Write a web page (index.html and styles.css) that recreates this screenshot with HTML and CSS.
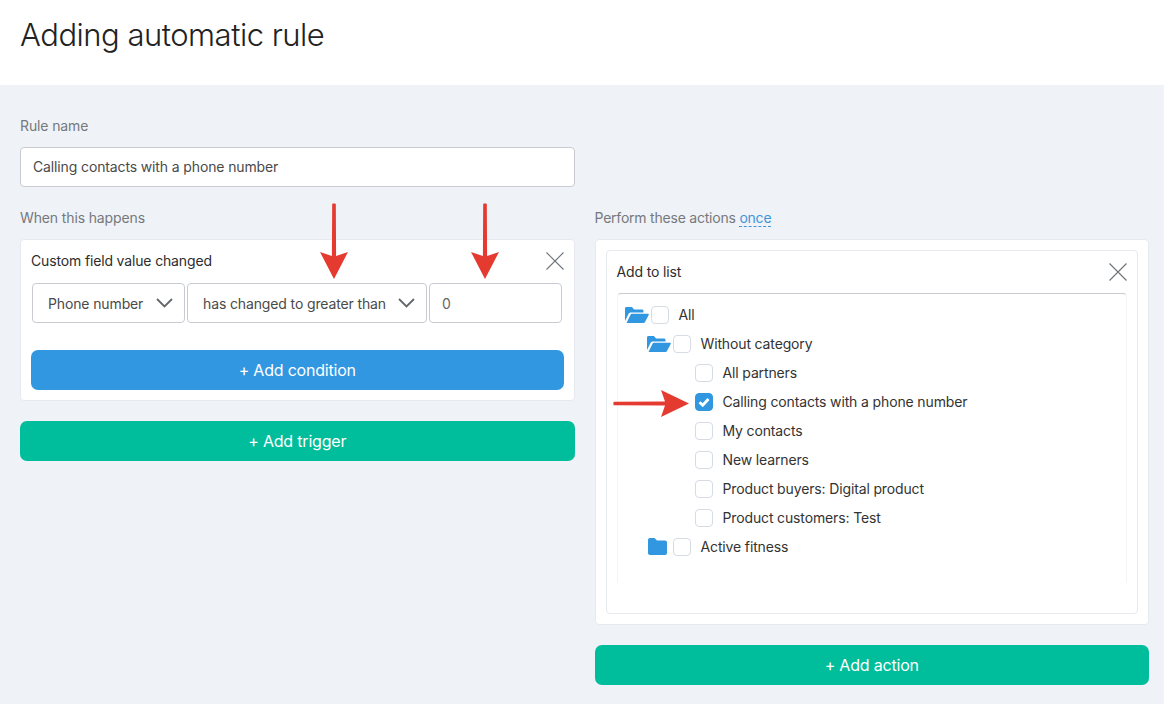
FILE: index.html
```html
<!DOCTYPE html>
<html lang="en">
<head>
<meta charset="utf-8">
<title>Adding automatic rule</title>
<link rel="stylesheet" href="styles.css">
</head>
<body>
<header class="header"><h1 class="title">Adding automatic rule</h1></header>
<main class="content">
  <div class="name-block">
    <label class="label">Rule name</label>
    <div class="input name-input">Calling contacts with a phone number</div>
  </div>
  <div class="columns">
    <section class="column">
      <div class="label">When this happens</div>
      <div class="card trigger-card">
        <div class="card-head">
          <span class="card-title">Custom field value changed</span>
          <svg class="close" viewBox="0 0 18 18"><path d="M0.5 0.5L17.5 17.5M17.5 0.5L0.5 17.5"/></svg>
        </div>
        <div class="condition">
          <div class="select select-field">Phone number<svg class="chev" viewBox="0 0 17 10"><path d="M1 1L8.5 8.5L16 1"/></svg></div>
          <div class="select select-op">has changed to greater than<svg class="chev" viewBox="0 0 17 10"><path d="M1 1L8.5 8.5L16 1"/></svg></div>
          <div class="select select-value">0</div>
        </div>
        <div class="btn btn-blue">+ Add condition</div>
      </div>
      <div class="btn btn-green add-trigger">+ Add trigger</div>
    </section>
    <section class="column">
      <div class="label label-tight">Perform these actions <a class="once">once</a></div>
      <div class="card action-card">
        <div class="inner-card">
          <div class="card-head action-head">
            <span class="card-title">Add to list</span>
            <svg class="close" viewBox="0 0 18 18"><path d="M0.5 0.5L17.5 17.5M17.5 0.5L0.5 17.5"/></svg>
          </div>
          <div class="tree">
            <div class="row lvl0"><svg class="folder" viewBox="0 0 24 16"><path d="M0 14V1.500C0 .7.7 0 1.500 0H7l2 2.500h8c.8 0 1.500.7 1.500 1.500V5.500H6C4.800 5.500 4 6 3.500 7L0 14ZM1.500 16L5.500 7.800C5.800 7.200 6.300 6.800 7 6.800H23C23.700 6.800 24 7.500 23.700 8.100L20 15C19.700 15.700 19.200 16 18.500 16Z"/></svg><span class="check"></span><span class="text">All</span></div>
            <div class="row lvl1"><svg class="folder" viewBox="0 0 24 16"><path d="M0 14V1.500C0 .7.7 0 1.500 0H7l2 2.500h8c.8 0 1.500.7 1.500 1.500V5.500H6C4.800 5.500 4 6 3.500 7L0 14ZM1.500 16L5.500 7.800C5.800 7.200 6.300 6.800 7 6.800H23C23.700 6.800 24 7.500 23.700 8.100L20 15C19.700 15.700 19.200 16 18.500 16Z"/></svg><span class="check"></span><span class="text">Without category</span></div>
            <div class="row lvl2"><span class="check"></span><span class="text">All partners</span></div>
            <div class="row lvl2"><span class="check checked"><svg viewBox="0 0 18 18"><path d="M4.500 9.300L7.700 12.300L13.500 6"/></svg></span><span class="text">Calling contacts with a phone number</span></div>
            <div class="row lvl2"><span class="check"></span><span class="text">My contacts</span></div>
            <div class="row lvl2"><span class="check"></span><span class="text">New learners</span></div>
            <div class="row lvl2"><span class="check"></span><span class="text">Product buyers: Digital product</span></div>
            <div class="row lvl2"><span class="check"></span><span class="text">Product customers: Test</span></div>
            <div class="row lvl1"><svg class="folder folder-closed" viewBox="0 0 19 17"><path d="M0 2C0 .8.8 0 2 0H6.500L9 2.500H17C18.200 2.500 19 3.300 19 4.500V15C19 16.200 18.200 17 17 17H2C.8 17 0 16.200 0 15Z"/></svg><span class="check"></span><span class="text">Active fitness</span></div>
          </div>
        </div>
      </div>
      <div class="btn btn-green add-action">+ Add action</div>
    </section>
  </div>
</main>
<svg class="arrow arrow-a" viewBox="0 0 28 77"><path d="M12.200 1C12.200 .2 15.800 .2 15.800 1L16.100 53L28 49L14 76L0 49L11.900 53Z"/></svg>
<svg class="arrow arrow-b" viewBox="0 0 28 77"><path d="M12.200 1C12.200 .2 15.800 .2 15.800 1L16.100 53L28 49L14 76L0 49L11.900 53Z"/></svg>
<svg class="arrow arrow-c" viewBox="0 0 77 27"><path d="M1 11.700C.2 11.700 .2 15.300 1 15.300L52 15.600L48 27L76 13.500L48 0L52 11.400Z"/></svg>
</body>
</html>
```

FILE: styles.css
```css
* { box-sizing: border-box; }
html, body { margin: 0; height: 100%; }
body {
  position: relative;
  height: 704px;
  overflow: hidden;
  background: #eff2f7;
  font-family: Inter, "Liberation Sans", sans-serif;
  font-size: 14px;
  letter-spacing: -0.13px;
  color: #333;
}
.header { height: 85px; background: #fff; padding: 15px 20px 0; }
.title { margin: 0; font-size: 31px; line-height: 40px; font-weight: 300; letter-spacing: -0.5px; color: #222; }
.content { padding: 31px 15px 0 20px; }
.label { display: block; font-size: 14px; line-height: 20px; color: #76797d; }
.label-tight { letter-spacing: -0.22px; }
.name-block { width: 555px; }
.input { background: #fff; border: 1px solid #c8ccd1; border-radius: 4px; }
.name-input { margin-top: 11px; height: 40px; padding: 0 12px; line-height: 38px; color: #4a4a4a; }
.columns { display: flex; gap: 20px; margin-top: 21px; align-items: flex-start; }
.column { width: 554.500px; }
.card { margin-top: 11px; background: #fff; border: 1px solid #e6e9ee; border-radius: 4px; }
.trigger-card { height: 162px; padding: 10px; }
.card-head { display: flex; justify-content: space-between; align-items: center; height: 22px; }
.card-title { line-height: 22px; color: #2d2d2d; letter-spacing: -0.15px; }
.close { width: 18px; height: 18px; fill: none; stroke: #6f7478; stroke-width: 1.100; }
.condition { display: flex; gap: 2px; margin-top: 11px; padding-left: 1px; }
.select {
  display: flex; align-items: center; justify-content: space-between;
  height: 40px; background: #fff; border: 1px solid #c8ccd1; border-radius: 4px; color: #4a4a4a;
}
.select-field { width: 153px; padding: 0 11px 0 15px; }
.select-op { width: 240px; padding: 0 11px 0 15px; }
.select-value { width: 133px; padding: 0 12px; color: #666; }
.chev { width: 17px; height: 10px; fill: none; stroke: #63676b; stroke-width: 1.800; }
.btn {
  display: flex; align-items: center; justify-content: center;
  height: 40px; border-radius: 7px; color: #fff; font-size: 16px; letter-spacing: -0.2px;
}
.btn-blue { background: #3097e0; margin-top: 27px; }
.btn-green { background: #00bd9b; }
.add-trigger { margin-top: 20px; }
.add-action { margin-top: 20px; }
.once { color: #3f96d9; border-bottom: 1px dashed #3f96d9; }
.action-card { padding: 10px; height: 386px; }
.inner-card { height: 364px; border: 1px solid #e6e9ee; border-radius: 4px; padding: 10px; }
.action-head { height: 22px; margin-bottom: 10px; }
.tree {
  height: 290px; border: 1px solid #f3f4f6; border-top: 1px solid #c8ccd1; border-bottom: 0; border-radius: 4px 4px 0 0;
  padding-top: 6px;
}
.row { display: flex; align-items: center; height: 29px; }
.lvl0 { padding-left: 7px; }
.lvl1 { padding-left: 29px; }
.lvl2 { padding-left: 77px; }
.folder { width: 24px; height: 16px; margin-right: 2px; fill: #3097e0; }
.folder-closed { width: 21px; height: 17px; margin-right: 5px; }
.check {
  flex: none; width: 18px; height: 18px; background: #fff; border: 1px solid #d5dce3; border-radius: 4px; margin-right: 10px;
}
.check.checked { background: #3097e0; border-color: #3097e0; position: relative; }
.check svg { position: absolute; left: -1px; top: -1px; width: 18px; height: 18px; fill: none; stroke: #fff; stroke-width: 2.800; }
.text { color: #333; letter-spacing: -0.14px; }
.arrow { position: absolute; fill: #e53a30; }
.arrow-a { left: 320px; top: 203px; width: 28px; height: 77px; }
.arrow-b { left: 471px; top: 203px; width: 28px; height: 77px; }
.arrow-c { left: 613px; top: 390px; width: 77px; height: 27px; }
```
